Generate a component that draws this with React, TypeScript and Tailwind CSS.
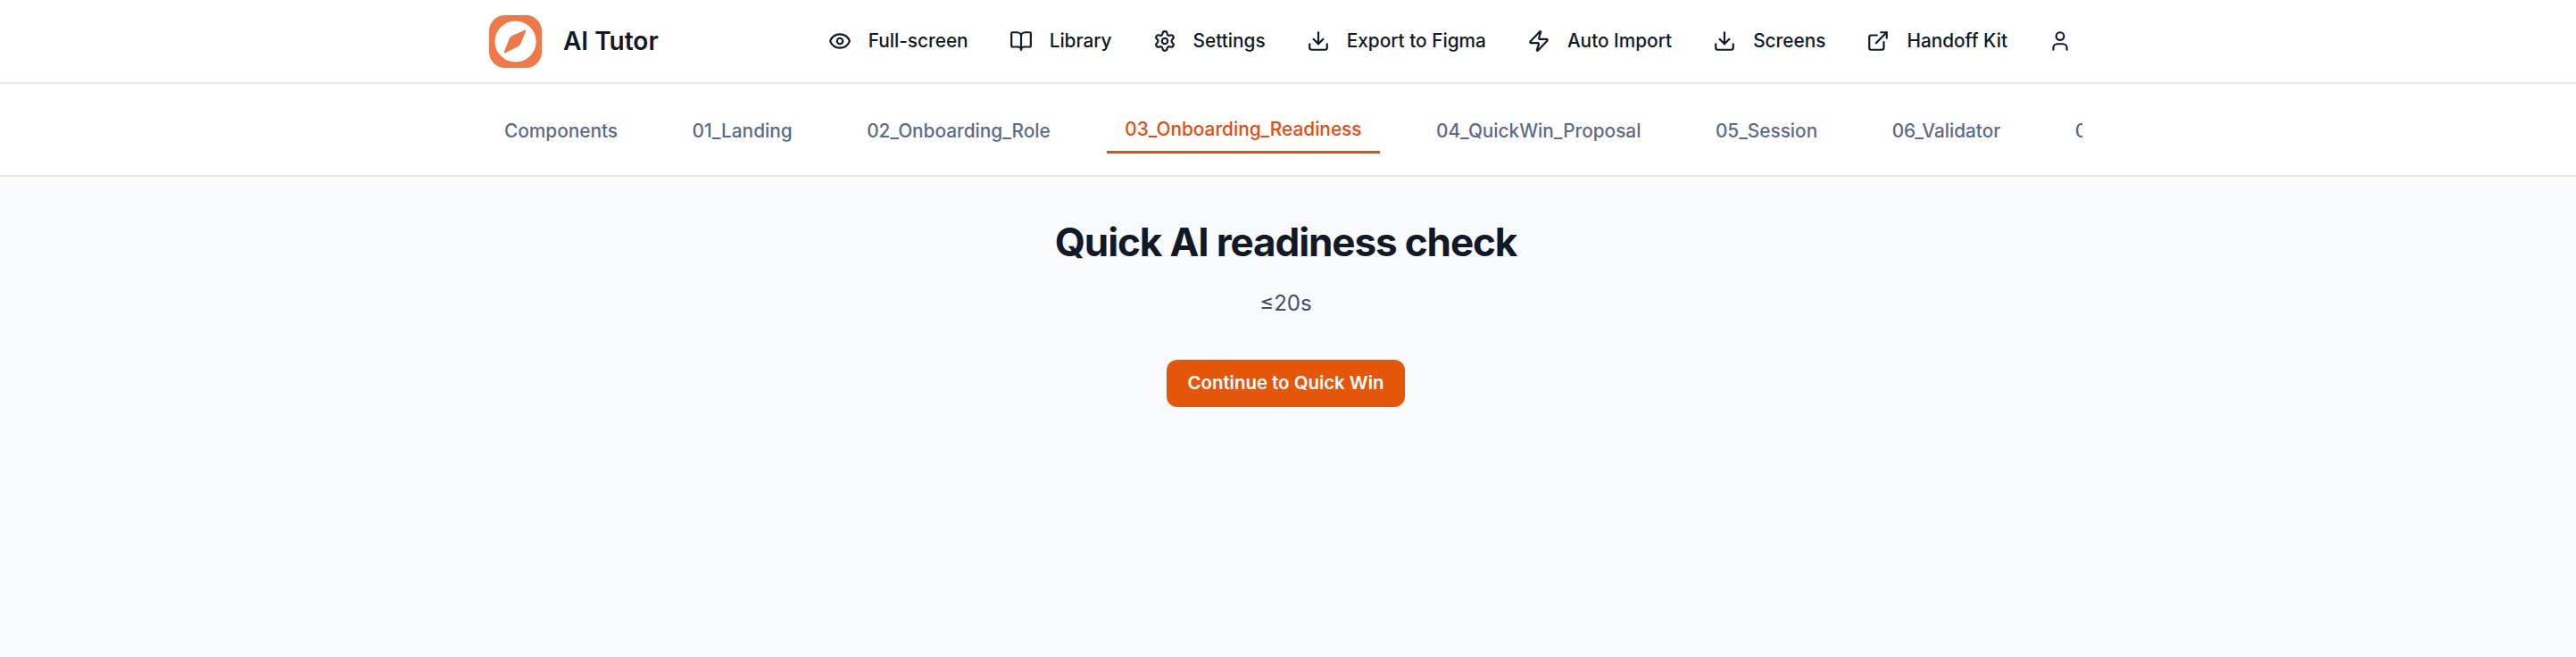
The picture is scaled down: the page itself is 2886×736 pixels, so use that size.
import React from 'react';
import { BookOpen, Download, ExternalLink, Eye, Settings, User, Zap } from 'lucide-react';

const navItems = [
  { label: 'Full-screen', icon: Eye },
  { label: 'Library', icon: BookOpen },
  { label: 'Settings', icon: Settings },
  { label: 'Export to Figma', icon: Download },
  { label: 'Auto Import', icon: Zap },
  { label: 'Screens', icon: Download },
  { label: 'Handoff Kit', icon: ExternalLink },
];

const tabs = [
  'Components',
  '01_Landing',
  '02_Onboarding_Role',
  '03_Onboarding_Readiness',
  '04_QuickWin_Proposal',
  '05_Session',
  '06_Validator',
  '07_Summary',
];

const Logo = () => (
  <svg viewBox="0 0 60 60" className="w-[59px] h-[59px] ml-[1px] shrink-0">
    <rect x="0" y="0" width="60" height="60" rx="18" fill="#f07748" />
    <circle cx="30" cy="30" r="23.5" fill="#ffffff" />
    <path d="M41 18 L35 32 Q34 34 32 35 L18 42 L24 27 Q25 25 27 24 Z" fill="#f07748" stroke="#f07748" strokeWidth="2" strokeLinejoin="round" />
  </svg>
);

export default function App() {
  return (
    <div className="min-h-[736px] bg-[#f9fafc] font-['Inter',sans-serif]">
      <header className="h-[94px] bg-white border-b-2 border-[#e5e7eb]">
        <div className="w-[1792px] h-full mx-auto flex items-center justify-between">
          <div className="flex items-center gap-[24px]">
            <Logo />
            <span className="text-[28px] font-semibold text-[#111827] whitespace-nowrap">AI Tutor</span>
          </div>
          <nav className="flex items-center gap-[46px] pr-[18px]">
            {navItems.map(({ label, icon: Icon }) => (
              <div key={label} className="flex items-center gap-[19px] text-[20.8px] font-medium text-[#111827] whitespace-nowrap">
                <Icon size={26} strokeWidth={2} />
                <span>{label}</span>
              </div>
            ))}
            <User size={26} strokeWidth={2} className="text-[#111827]" />
          </nav>
        </div>
      </header>

      <div className="h-[104px] bg-white border-b-2 border-[#e5e7eb]">
        <div className="w-[1788px] ml-[545px] h-[78px] overflow-hidden flex items-start gap-[43.5px]">
          {tabs.map((tab) => {
            const active = tab === '03_Onboarding_Readiness';
            return (
              <div
                key={tab}
                className={
                  active
                    ? 'shrink-0 px-[20px] h-[78px] pt-[27px] flex items-center text-[20.8px] font-medium text-[#ea4a0c] border-b-[3px] border-[#ea4a0c]'
                    : 'shrink-0 px-[20px] h-[78px] pt-[27px] flex items-center text-[20.8px] font-medium text-[#5b6b88]'
                }
              >
                {tab}
              </div>
            );
          })}
        </div>
      </div>

      <main className="flex flex-col items-center pt-[41px] pr-[5px]">
        <h1 className="text-[44px] leading-[64px] font-bold text-[#111827] tracking-[-1.1px]">Quick AI readiness check</h1>
        <p className="mt-[21px] text-[24px] leading-[32px] text-[#3f4f6b]">≤20s</p>
        <button className="mt-[47px] h-[53px] w-[267px] rounded-[12px] bg-[#e4570a] text-white text-[20.4px] font-semibold">
          Continue to Quick Win
        </button>
      </main>
    </div>
  );
}
